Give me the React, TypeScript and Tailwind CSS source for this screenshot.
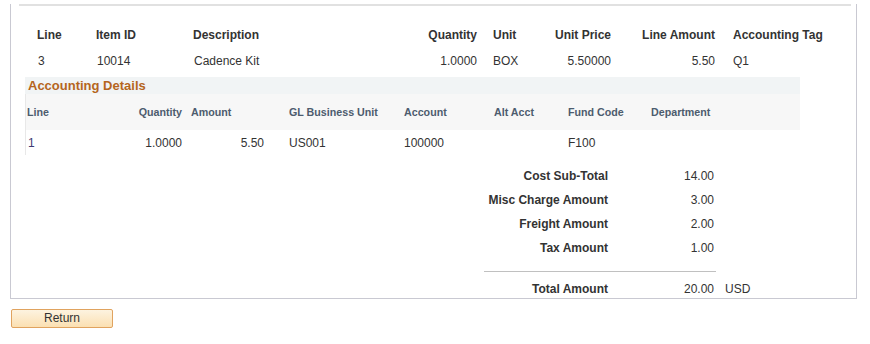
import React from "react";

const topCols = "grid grid-cols-[59px_97px_207px_77px_63px_71px_104px_1fr]";
const acctCols = "grid grid-cols-[74px_82px_82px_140px_90px_74px_83px_1fr]";

const totals = [
  { label: "Cost Sub-Total", value: "14.00" },
  { label: "Misc Charge Amount", value: "3.00" },
  { label: "Freight Amount", value: "2.00" },
  { label: "Tax Amount", value: "1.00" },
];

export default function App() {
  return (
    <div className="w-[870px] h-[344px] bg-white font-['Liberation_Sans',Arial,sans-serif] text-[12px] text-[#333]">
      {/* Line detail box */}
      <div className="ml-[10px] w-[847px] border-x border-b border-[#c9c9d2]">
        <div className="ml-[8px] mt-[4px] h-[2px] w-[832px] bg-[#e1e1e1]" />

        {/* Line table */}
        <div className="ml-[26px]">
          <div className={`${topCols} mt-[19px] h-[20px] items-center font-bold`}>
            <div>Line</div>
            <div>Item ID</div>
            <div>Description</div>
            <div className="text-right">Quantity</div>
            <div className="pl-[16px]">Unit</div>
            <div className="text-right">Unit Price</div>
            <div className="text-right">Line Amount</div>
            <div className="pl-[18px]">Accounting Tag</div>
          </div>
          <div className={`${topCols} mt-[6px] h-[20px] items-center`}>
            <div className="pl-[1px]">3</div>
            <div className="pl-[1px]">10014</div>
            <div className="pl-[1px]">Cadence Kit</div>
            <div className="text-right">1.0000</div>
            <div className="pl-[16px]">BOX</div>
            <div className="text-right">5.50000</div>
            <div className="text-right">5.50</div>
            <div className="pl-[18px]">Q1</div>
          </div>
        </div>

        {/* Accounting details */}
        <div className="ml-[14px] mt-[6px] w-[775px]">
          <div className="h-[17px] bg-[#f1f4f5] pl-[3px] text-[13px] font-bold leading-[17px] text-[#b5651d]">
            Accounting Details
          </div>
          <div className={`${acctCols} h-[36px] items-center border-l border-[#e8e8e8] bg-[#f7f7f7] text-[10.7px] font-bold text-[#4d5c6e]`}>
            <div className="pl-[1px]">Line</div>
            <div className="text-right">Quantity</div>
            <div className="pl-[9px]">Amount</div>
            <div className="pl-[25px]">GL Business Unit</div>
            <div>Account</div>
            <div>Alt Acct</div>
            <div>Fund Code</div>
            <div>Department</div>
          </div>
          <div className={`${acctCols} h-[25px] items-center border-l border-[#e8e8e8]`}>
            <div className="pl-[2px] text-[#3f3a72]">1</div>
            <div className="text-right">1.0000</div>
            <div className="text-right">5.50</div>
            <div className="pl-[25px]">US001</div>
            <div>100000</div>
            <div />
            <div>F100</div>
            <div />
          </div>
        </div>

        {/* Totals */}
        <div className="ml-[473px] mt-[9px]">
          {totals.map((t) => (
            <div key={t.label} className="grid h-[24px] grid-cols-[124px_106px_1fr] items-center">
              <div className="text-right font-bold">{t.label}</div>
              <div className="text-right">{t.value}</div>
              <div />
            </div>
          ))}
          <div className="mt-[11px] h-px w-[232px] bg-[#c0c0c0]" />
          <div className="mt-[7px] grid h-[19px] grid-cols-[124px_106px_1fr] items-center">
            <div className="text-right font-bold">Total Amount</div>
            <div className="text-right">20.00</div>
            <div className="pl-[11px]">USD</div>
          </div>
        </div>
      </div>

      {/* Return button */}
      <button className="ml-[11px] mt-[10px] h-[19px] w-[102px] rounded-[2px] border border-[#e0a35f] bg-gradient-to-b from-[#fdf3e0] to-[#fbe0b2] text-[12px] leading-[17px] text-[#333]">
        Return
      </button>
    </div>
  );
}
